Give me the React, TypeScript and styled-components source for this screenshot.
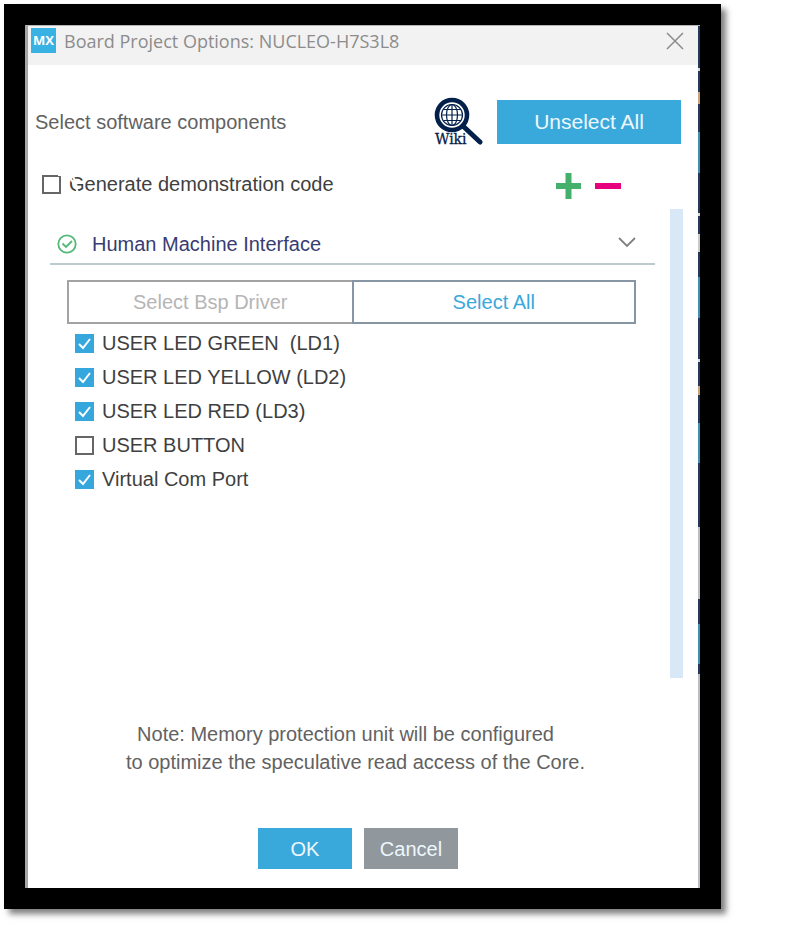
import React, { useState } from "react";
import styled, { createGlobalStyle } from "styled-components";

const Global = createGlobalStyle`
  * { box-sizing: border-box; }
  body { margin: 0; background: #fff; font-family: "Liberation Sans", Arial, sans-serif; font-size: 20px; line-height: 28px; color: #3f3f41; }
  button { font: inherit; cursor: pointer; padding: 0; }
`;

const Page = styled.main`
  padding: 4px 79px 16px 4px;
`;

const Frame = styled.div`
  border: 21px solid #000;
  box-shadow: 5px 5px 6px rgba(0, 0, 0, 0.5);
`;

/* The right-hand gradient is the sliver of the window behind the dialog. */
const Dialog = styled.section`
  min-height: 863px;
  display: flex;
  flex-direction: column;
  padding-right: 2px;
  border-left: 3px solid #a6a6a6;
  border-top: 1px solid #b5b5b5;
  background:
    linear-gradient(
      #26385a 0 42px, #d8d8d8 42px 45px, #26385a 45px 66px, #c9a27a 66px 78px, #26385a 78px 106px,
      #3f8fb5 106px 147px, #26385a 147px 187px, #d8d8d8 187px 190px, #26385a 190px 208px,
      #c8c8c8 208px 226px, #26385a 226px 251px, #3f8fb5 251px 292px, #26385a 292px 333px,
      #d8d8d8 333px 336px, #26385a 336px 360px, #c9a27a 360px 369px, #26385a 369px 397px,
      #3f8fb5 397px 437px, #26385a 437px 501px, #b9bcc0 501px 573px, #26385a 573px 598px,
      #3f8fb5 598px 638px, #26385a 638px 648px, #b9bcc0 648px
    ) right / 2px 100% no-repeat,
    #fff;
`;

const TitleBar = styled.header`
  height: 39px;
  display: flex;
  align-items: flex-start;
  gap: 8px;
  padding: 2px 14px 0 3px;
  background: #f2f2f2;
`;

const AppIcon = styled.span`
  width: 25px;
  height: 25px;
  background: #38b1e3;
  color: #fff;
  font: 700 13px/24px "Open Sans", sans-serif;
  text-align: center;
`;

const Title = styled.h1`
  flex: 1;
  margin: 0;
  font: 400 18px/26px "Open Sans", sans-serif;
  color: #8c8c8c;
`;

const IconButton = styled.button`
  display: flex;
  background: none;
  border: 0;
`;

const Header = styled.div`
  display: flex;
  align-items: center;
  gap: 14px;
  padding: 31px 17px 0 7px;
`;

const Heading = styled.h2`
  flex: 1;
  margin: 0;
  font-size: 20px;
  font-weight: 400;
  color: #626262;
`;

const FilledButton = styled.button<{ $wide?: boolean; $muted?: boolean }>`
  width: ${(p) => (p.$wide ? 184 : 94)}px;
  height: ${(p) => (p.$wide ? 44 : 41)}px;
  font-size: ${(p) => (p.$wide ? 21 : 20)}px;
  background: ${(p) => (p.$muted ? "#90979d" : "#39a9dc")};
  border: 0;
  color: #eef7fc;
`;

const DemoRow = styled.div`
  display: flex;
  align-items: center;
  justify-content: space-between;
  padding: 21px 77px 0 14px;
`;

const ExpandTools = styled.div`
  display: flex;
  gap: 14px;
  padding-top: 4px;
`;

const CheckLabel = styled.label`
  display: flex;
  align-items: center;
  gap: 8px;
  white-space: pre;
`;

const CheckInput = styled.input`
  appearance: none;
  flex: none;
  width: 19px;
  height: 19px;
  margin: 0;
  border: 2px solid #666;
  background: #fff;
  &:checked {
    border: 0;
    background: #36a7dc url("data:image/svg+xml,%3Csvg xmlns='http://www.w3.org/2000/svg' viewBox='0 0 19 19'%3E%3Cpath d='M4 10l4 4 7-9' fill='none' stroke='white' stroke-width='2'/%3E%3C/svg%3E");
  }
`;

const Scroller = styled.div`
  min-height: 469px;
  margin-top: 10px;
  padding-right: 15px;
  padding-left: 22px;
  display: flex;
  gap: 15px;
`;

const Content = styled.div`
  flex: 1;
  padding-top: 21px;
`;

const Track = styled.div`
  width: 13px;
  background: #d9e8f6;
`;

const GroupHeader = styled.button`
  width: 100%;
  height: 35px;
  display: flex;
  align-items: flex-start;
  gap: 15px;
  padding: 0 19px 0 7px;
  background: none;
  border: 0;
  border-bottom: 2px solid #bccbd0;
  color: #383c72;
  text-align: left;
  svg { margin-top: 4px; }
`;

const GroupName = styled.span`
  flex: 1;
`;

const Pair = styled.div`
  display: grid;
  grid-template-columns: 1fr 1fr;
  margin: 15px 19px 5px 17px;
`;

const OutlineButton = styled.button`
  height: 44px;
  background: #fff;
  border: 2px solid #8796a4;
  color: #39a9dc;
  &:disabled { border-color: #a3a3a3; border-right: 0; color: #b5b5b5; cursor: default; }
`;

const List = styled.ul`
  list-style: none;
  margin: 0;
  padding: 0 0 0 25px;
  display: grid;
  row-gap: 6px;
`;

const Note = styled.p`
  margin: 42px 0 0;
  padding-right: 15px;
  text-align: center;
  color: #626262;
`;

const NoteLine = styled.span<{ $inset?: boolean }>`
  display: block;
  padding-right: ${(p) => (p.$inset ? 20 : 0)}px;
`;

const Footer = styled.footer`
  display: flex;
  justify-content: center;
  gap: 12px;
  margin-top: 52px;
  padding: 0 10px 16px 0;
`;

const DemoLabel = styled(CheckLabel)`
  position: relative;
`;

const Scratch = styled.svg`
  position: absolute;
  left: 15px;
  top: 2px;
  pointer-events: none;
`;

const drivers = [
  { name: "USER LED GREEN  (LD1)", on: true },
  { name: "USER LED YELLOW (LD2)", on: true },
  { name: "USER LED RED (LD3)", on: true },
  { name: "USER BUTTON", on: false },
  { name: "Virtual Com Port", on: true },
];

const WikiIcon = () => (
  <svg width="49" height="52" viewBox="0 -1 49 52" fill="none" stroke="#03204b">
    <circle cx="18" cy="18" r="15" strokeWidth="4.6" />
    <g strokeWidth="1.2">
      <circle cx="18" cy="18" r="10.5" />
      <ellipse cx="18" cy="18" rx="5.5" ry="10.5" />
      <path d="M18 8v21M8 18h21M10 12.500h17M10 23.500h17" />
    </g>
    <path d="M30 30l16 15" strokeWidth="5" strokeLinecap="round" />
    <text x="1" y="47" fill="#03204b" strokeWidth=".3" fontFamily="DejaVu Serif, serif" fontSize="14">Wiki</text>
  </svg>
);

export default function App() {
  const [demo, setDemo] = useState(false);
  const [picked, setPicked] = useState(drivers.map((d) => d.on));
  const setAll = (value: boolean) => setPicked(drivers.map(() => value));

  return (
    <>
      <Global />
      <Page>
        <Frame>
          <Dialog role="dialog" aria-labelledby="title">
            <TitleBar>
              <AppIcon>MX</AppIcon>
              <Title id="title">Board Project Options: NUCLEO-H7S3L8</Title>
              <IconButton aria-label="Close">
                <svg width="18" height="26" viewBox="0 0 18 26" stroke="#8a8a8a" strokeWidth="1.5">
                  <path d="M1 5l16 16M17 5L1 21" />
                </svg>
              </IconButton>
            </TitleBar>
            <Header>
              <Heading>Select software components</Heading>
              <IconButton aria-label="Open wiki"><WikiIcon /></IconButton>
              <FilledButton $wide onClick={() => setAll(false)}>Unselect All</FilledButton>
            </Header>
            <DemoRow>
              <DemoLabel>
                <CheckInput type="checkbox" checked={demo} onChange={() => setDemo(!demo)} />
                Generate demonstration code
                <Scratch width="26" height="24" viewBox="0 0 26 24" stroke="#fff">
                  <path d="M1 3h4v2" strokeWidth="2" fill="none" />
                  <path d="M13 5l8 15M16 4l3 8" strokeWidth="2" />
                </Scratch>
              </DemoLabel>
              <ExpandTools>
                <IconButton aria-label="Expand all">
                  <svg width="25" height="26" viewBox="0 0 25 26" fill="#45b06c">
                    <path d="M9.500 0h6v10h9.500v6h-9.500v10h-6V16H0v-6h9.500z" />
                  </svg>
                </IconButton>
                <IconButton aria-label="Collapse all">
                  <svg width="26" height="26" viewBox="0 0 26 26" fill="#e6007e">
                    <path d="M0 10h26v6H0z" />
                  </svg>
                </IconButton>
              </ExpandTools>
            </DemoRow>
            <Scroller>
              <Content>
                <GroupHeader aria-expanded="true">
                  <svg width="20" height="20" viewBox="0 0 20 20" fill="none" stroke="#54b878" strokeWidth="1.8">
                    <circle cx="10" cy="10" r="8.700" />
                    <path d="M5.500 9.500l3.500 3.500 6-6" />
                  </svg>
                  <GroupName>Human Machine Interface</GroupName>
                  <svg width="18" height="18" viewBox="0 0 18 18" fill="none" stroke="#808080" strokeWidth="1.800">
                    <path d="M1 4l8 8 8-8" />
                  </svg>
                </GroupHeader>
                <Pair>
                  <OutlineButton disabled>Select Bsp Driver</OutlineButton>
                  <OutlineButton onClick={() => setAll(true)}>Select All</OutlineButton>
                </Pair>
                <List>
                  {drivers.map((d, i) => (
                    <li key={d.name}>
                      <CheckLabel>
                        <CheckInput
                          type="checkbox"
                          checked={picked[i]}
                          onChange={() => setPicked(picked.map((v, j) => (j === i ? !v : v)))}
                        />
                        {d.name}
                      </CheckLabel>
                    </li>
                  ))}
                </List>
              </Content>
              <Track />
            </Scroller>
            <Note>
              <NoteLine $inset>Note: Memory protection unit will be configured</NoteLine>
              <NoteLine>to optimize the speculative read access of the Core.</NoteLine>
            </Note>
            <Footer>
              <FilledButton>OK</FilledButton>
              <FilledButton $muted>Cancel</FilledButton>
            </Footer>
          </Dialog>
        </Frame>
      </Page>
    </>
  );
}
